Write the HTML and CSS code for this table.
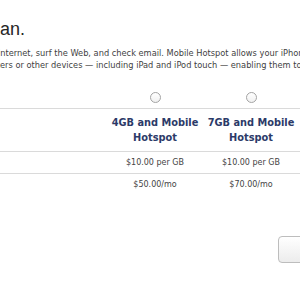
FILE: index.html
```html
<!DOCTYPE html>
<html lang="en">
<head>
<meta charset="utf-8">
<title>Choose a plan</title>
<link rel="stylesheet" href="styles.css">
</head>
<body>
<main class="page">
  <h1 class="title">Choose a plan.</h1>
  <p class="intro">
    <span class="line line-1">the Internet, surf the Web, and check email. Mobile Hotspot allows your iPhone to share its cellular data connection</span>
    <span class="line line-2">computers or other devices — including iPad and iPod touch — enabling them to get online.</span>
  </p>
  <table class="plans">
    <colgroup>
      <col class="c-label">
      <col class="c-plan">
      <col class="c-plan">
      <col class="c-plan">
    </colgroup>
    <tr class="row-select">
      <td></td>
      <td><input type="radio" name="plan" class="radio"></td>
      <td><input type="radio" name="plan" class="radio"></td>
      <td><input type="radio" name="plan" class="radio"></td>
    </tr>
    <tr class="row-head">
      <td></td>
      <th>4GB and Mobile Hotspot</th>
      <th>7GB and Mobile Hotspot</th>
      <th>10GB and Mobile Hotspot</th>
    </tr>
    <tr class="row-data">
      <td></td>
      <td>$10.00 per GB</td>
      <td>$10.00 per GB</td>
      <td>$10.00 per GB</td>
    </tr>
    <tr class="row-data row-last">
      <td></td>
      <td>$50.00/mo</td>
      <td>$70.00/mo</td>
      <td>$90.00/mo</td>
    </tr>
  </table>
  <div class="actions">
    <button class="btn" type="button">Continue</button>
  </div>
</main>
</body>
</html>
```
FILE: styles.css
```css
html, body {
  margin: 0;
  padding: 0;
  background: #ffffff;
}
body {
  width: 300px;
  height: 300px;
  overflow: hidden;
}
.page {
  display: flex;
  flex-direction: column;
  width: 300px;
}
.title {
  margin: 19px 0 0 -96px;
  font-family: "Liberation Sans", Arial, sans-serif;
  font-size: 18px;
  line-height: 21px;
  font-weight: normal;
  color: #262626;
  white-space: nowrap;
}
.intro {
  margin: 7px 0 0 0;
  font-family: "DejaVu Sans", Verdana, sans-serif;
  font-size: 8.25px;
  line-height: 12px;
  color: #3f3f3f;
}
.line {
  display: block;
  white-space: nowrap;
}
.line-1 { margin-left: -18.4px; }
.line-2 { margin-left: -31.3px; }
.plans {
  margin-top: 15px;
  border-collapse: collapse;
  table-layout: fixed;
  width: 395px;
  font-family: "DejaVu Sans", Verdana, sans-serif;
}
.c-label { width: 107px; }
.c-plan { width: 96px; }
.plans td, .plans th {
  padding: 0;
  text-align: center;
  vertical-align: middle;
}
.row-select td {
  height: 22px;
  border-bottom: 1px solid #dadada;
}
.radio {
  appearance: none;
  -webkit-appearance: none;
  display: block;
  margin: 0 auto;
  width: 11px;
  height: 11px;
  border: 1px solid #a4a4a4;
  border-radius: 50%;
  background: linear-gradient(#ffffff, #f1f1f1);
  box-sizing: border-box;
}
.row-head td, .row-head th {
  height: 42px;
  padding: 6px 0;
  box-sizing: border-box;
  border-bottom: 1px solid #dadada;
}
.row-head th {
  font-size: 9.8px;
  line-height: 15px;
  font-weight: bold;
  color: #2c3a68;
}
.row-data td {
  height: 21px;
  font-size: 8px;
  line-height: 10px;
  color: #444444;
  border-bottom: 1px solid #dadada;
}
.row-last td {
  height: 22px;
  border-bottom: none;
}
.actions {
  display: flex;
  margin-top: 40px;
  padding-left: 278px;
}
.btn {
  flex: none;
  width: 80px;
  height: 27px;
  padding: 0 0 0 26px;
  border: 1px solid #bdbdbd;
  border-radius: 4px;
  background: linear-gradient(#ffffff, #ececec);
  font-family: "DejaVu Sans", Verdana, sans-serif;
  font-size: 9px;
  color: #333333;
  text-align: left;
}
```
